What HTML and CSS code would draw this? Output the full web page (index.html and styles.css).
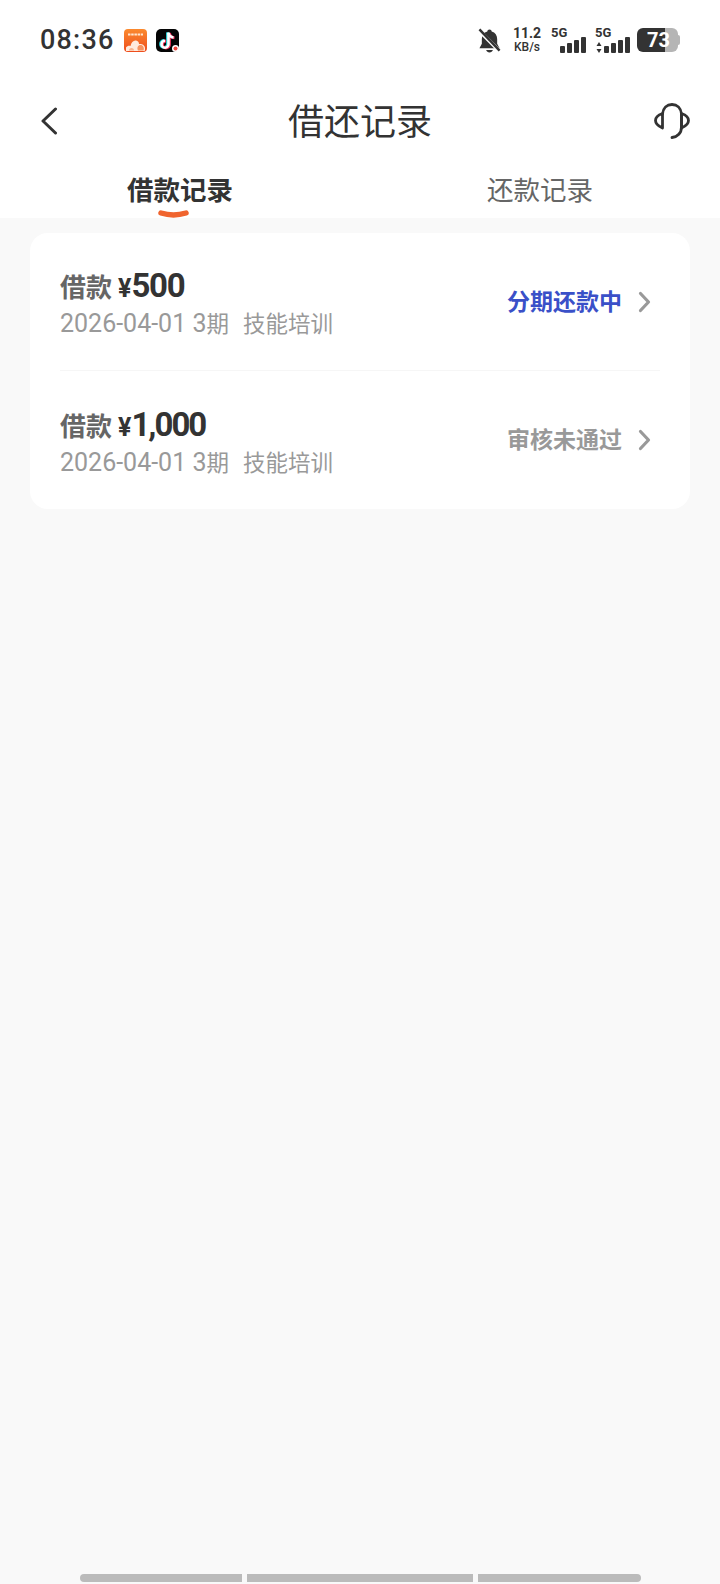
FILE: index.html
```html
<!DOCTYPE html>
<html lang="zh-CN">
<head>
    <meta charset="UTF-8">
    <meta name="viewport" content="width=device-width, initial-scale=1.0">
    <title>借还记录</title>
    <link rel="stylesheet" href="styles.css">
</head>
<body>
<div class="page">

    <div class="status-bar">
        <div class="status-left">
            <span class="clock">08:36</span>
            <svg class="app-icon first" viewBox="0 0 23 23">
                <defs>
                    <linearGradient id="orange" x1="0" y1="0" x2="0" y2="1">
                        <stop offset="0" stop-color="#fb8a2e"/>
                        <stop offset="1" stop-color="#ee4c1c"/>
                    </linearGradient>
                </defs>
                <rect width="23" height="23" rx="4" fill="url(#orange)"/>
                <path d="M4 5.500h15" stroke="#ffe6cf" stroke-width="2" stroke-dasharray="2.500 .7"/>
                <path d="M2 22v-3.500c1-1.500 3-2 4.500-1.500.7-3.500 3-6 5.500-5.500 2 .4 3 1.800 3 3.500 2.500-.5 6 1 6 4v2c0 .6-.4 1-1 1z" fill="#ffeadc"/>
                <path d="M14 21.500c-1.500-3 0-5.500 2.500-5.500s4 2.500 3 5.500z" fill="#f7935f"/>
                <path d="M5 21.500c0-1.500 1-2.500 2.500-2.500S10 20 10 21.500z" fill="#f9b48e"/>
            </svg>
            <svg class="app-icon" viewBox="0 0 23 23">
                <rect width="23" height="23" rx="5" fill="#050505"/>
                <g fill="none" stroke-width="2.800" transform="translate(-1 .5)" stroke="#2ad4dc">
                    <path d="M12.500 3v11.500a3.500 3.500 0 1 1-3.500-3.500"/>
                    <path d="M12.500 3c.3 2.800 2.200 4.500 5 4.800"/>
                </g>
                <g fill="none" stroke-width="2.800" transform="translate(1 1)" stroke="#f5305c">
                    <path d="M12.500 3v11.500a3.500 3.500 0 1 1-3.500-3.500"/>
                    <path d="M12.500 3c.3 2.800 2.200 4.500 5 4.800"/>
                </g>
                <g fill="none" stroke-width="2.600" transform="translate(0 .7)" stroke="#fff">
                    <path d="M12.500 3v11.500a3.500 3.500 0 1 1-3.500-3.500"/>
                    <path d="M12.500 3c.3 2.800 2.200 4.500 5 4.800"/>
                </g>
                <circle cx="19.500" cy="19.500" r="3.500" fill="#fff"/>
                <circle cx="19.500" cy="19.500" r="2" fill="#f0433a"/>
            </svg>
        </div>
        <div class="status-right">
            <svg class="bell" viewBox="0 0 24 26">
                <path d="M12 1.500c1.300 0 2.200.9 2.300 2 3.700 1 5.700 4 5.700 8v5l2.500 4.500H1.500L4 16.500v-5c0-4 2-7 5.700-8 .1-1.100 1-2 2.300-2z" fill="#333"/>
                <path d="M8.500 23h7c-.4 1.500-1.800 2.500-3.500 2.500S8.900 24.500 8.500 23z" fill="#333"/>
                <path d="M1.500 3l21 21" stroke="#fff" stroke-width="4"/>
                <path d="M1.500 1.500l21 22" stroke="#333" stroke-width="2.600"/>
            </svg>
            <div class="speed">
                <span class="speed-num">11.2</span>
                <span class="speed-unit">KB/s</span>
            </div>
            <div class="signal">
                <span class="net">5G</span>
                <div class="bars">
                    <i class="b1"></i><i class="b2"></i><i class="b3"></i><i class="b4"></i>
                </div>
            </div>
            <div class="signal second">
                <span class="net">5G</span>
                <div class="bars">
                    <svg class="updown" viewBox="0 0 6 11"><path d="M3 0l2.500 4h-5zM3 11L.5 7h5z" fill="#333"/></svg>
                    <i class="b1"></i><i class="b2"></i><i class="b3"></i><i class="b4"></i>
                </div>
            </div>
            <div class="battery">
                <div class="battery-body"><span>73</span></div>
                <div class="battery-nub"></div>
            </div>
        </div>
    </div>

    <div class="header">
        <svg class="back" viewBox="0 0 18 28"><path d="M15.500 2L3 14l12.500 12" fill="none" stroke="#333" stroke-width="3" stroke-linecap="round" stroke-linejoin="round"/></svg>
        <h1>借还记录</h1>
        <svg class="service" viewBox="0 0 36 36">
            <path d="M8.500 11C9 5 13 1.500 18 1.500S27 5 27.500 11v13c0 6-4 10-9.500 10.500" fill="none" stroke="#333" stroke-width="2.800" stroke-linecap="round"/>
            <path d="M8.500 10.500C4 12 1.500 15 1.500 17.500S4 23 8.500 25zM27.500 10.500c4.500 1.500 7 4.500 7 7s-2.500 5.500-7 7.500z" fill="none" stroke="#333" stroke-width="2.800" stroke-linejoin="round"/>
        </svg>
    </div>

    <div class="tabs">
        <div class="tab active">
            借款记录
            <svg class="tab-mark" viewBox="0 0 31 8"><path d="M3 3C11 5.500 20 5.500 28 3" fill="none" stroke="#f0642e" stroke-width="5.500" stroke-linecap="round"/></svg>
        </div>
        <div class="tab">还款记录</div>
    </div>

    <div class="content">
        <div class="card">
            <div class="row">
                <div class="row-info">
                    <div class="row-title">
                        <span class="label">借款</span>
                        <span class="yen">¥</span><span class="amount">500</span>
                    </div>
                    <div class="row-meta">2026-04-01 3<span class="cjk">期</span><span class="cjk purpose">技能培训</span></div>
                </div>
                <div class="row-state">
                    <span class="state-text blue">分期还款中</span>
                    <svg class="arrow" viewBox="0 0 13 22"><path d="M2.500 2.500l8 8.500-8 8.500" fill="none" stroke="#999" stroke-width="3.200" stroke-linecap="round" stroke-linejoin="round"/></svg>
                </div>
            </div>
            <div class="row">
                <div class="row-info">
                    <div class="row-title">
                        <span class="label">借款</span>
                        <span class="yen">¥</span><span class="amount long">1,000</span>
                    </div>
                    <div class="row-meta">2026-04-01 3<span class="cjk">期</span><span class="cjk purpose">技能培训</span></div>
                </div>
                <div class="row-state">
                    <span class="state-text">审核未通过</span>
                    <svg class="arrow" viewBox="0 0 13 22"><path d="M2.500 2.500l8 8.500-8 8.500" fill="none" stroke="#999" stroke-width="3.200" stroke-linecap="round" stroke-linejoin="round"/></svg>
                </div>
            </div>
        </div>
    </div>

    <div class="nav-bar">
        <div class="seg left"></div>
        <div class="seg middle"></div>
        <div class="seg right"></div>
    </div>

</div>
</body>
</html>
```

FILE: styles.css
```css
* {
    box-sizing: border-box;
}
html, body {
    margin: 0;
    padding: 0;
}
body {
    font-family: Roboto, "Noto Sans CJK SC", sans-serif;
    color: #333;
    background: #f9f9f9;
}
.page {
    width: 720px;
    height: 1584px;
    overflow: hidden;
    display: flex;
    flex-direction: column;
}

/* status bar */
.status-bar {
    height: 80px;
    flex: none;
    padding: 0 40px;
    background: #fff;
    display: flex;
    align-items: center;
    justify-content: space-between;
}
.status-left {
    display: flex;
    align-items: center;
}
.clock {
    font-size: 27px;
    font-weight: 500;
    letter-spacing: 1.200px;
    width: 84px;
}
.app-icon {
    width: 23px;
    height: 23px;
    margin-left: 9px;
}
.app-icon.first {
    margin-left: 0;
}
.status-right {
    display: flex;
    align-items: center;
}
.bell {
    width: 23px;
    height: 25px;
}
.speed {
    margin-left: 11px;
    width: 30px;
    display: flex;
    flex-direction: column;
    align-items: center;
    gap: 2px;
    font-weight: 700;
}
.speed-num {
    font-size: 14px;
    line-height: 13px;
}
.speed-unit {
    font-size: 12px;
    line-height: 11px;
    font-weight: 500;
}
.signal {
    margin-left: 7px;
    width: 37px;
    height: 26px;
    position: relative;
}
.signal.second {
    margin-left: 7px;
}
.net {
    position: absolute;
    left: 2px;
    top: 0;
    font-size: 13px;
    line-height: 12px;
    font-weight: 700;
}
.bars {
    position: absolute;
    right: 0;
    bottom: 0;
    display: flex;
    align-items: flex-end;
    gap: 2.300px;
}
.bars i {
    display: block;
    width: 4.700px;
    border-radius: 1px;
    background: #333;
}
.bars .b1 { height: 7px; }
.bars .b2 { height: 10px; }
.bars .b3 { height: 13px; }
.bars .b4 { height: 16px; }
.updown {
    width: 6px;
    height: 11px;
}
.battery {
    margin-left: 7px;
    display: flex;
    align-items: center;
}
.battery-body {
    width: 41px;
    height: 24px;
    border-radius: 6px;
    background: linear-gradient(to right, #333 0, #333 28px, #b5b5b5 28px, #b5b5b5 100%);
    color: #fff;
    font-size: 20px;
    font-weight: 700;
    line-height: 24px;
    padding-left: 10px;
}
.battery-nub {
    width: 2px;
    height: 10px;
    border-radius: 0 2px 2px 0;
    background: #b5b5b5;
}

/* header */
.header {
    height: 82px;
    flex: none;
    padding: 0 30px;
    background: #fff;
    display: grid;
    grid-template-columns: 1fr auto 1fr;
    align-items: center;
}
.header h1 {
    margin: 0;
    padding-top: 5px;
    font-size: 36px;
    font-weight: 400;
    line-height: 77px;
}
.back {
    width: 18px;
    height: 28px;
    margin-left: 10px;
}
.service {
    width: 36px;
    height: 36px;
    justify-self: end;
}

/* tabs */
.tabs {
    height: 56px;
    flex: none;
    background: #fff;
    display: flex;
}
.tab {
    flex: 1;
    position: relative;
    text-align: center;
    font-size: 26.500px;
    line-height: 58px;
    color: #666;
}
.tab.active {
    color: #333;
    font-weight: 700;
}
.tab-mark {
    position: absolute;
    left: 158px;
    top: 48px;
    width: 31px;
    height: 8px;
}

/* list */
.content {
    flex: 1;
    padding: 15px 30px;
}
.card {
    background: #fff;
    border-radius: 18px;
}
.row {
    height: 138px;
    margin: 0 30px;
    padding-right: 9px;
    display: flex;
    align-items: center;
    justify-content: space-between;
    border-bottom: 1px solid #f6f6f6;
}
.row:last-child {
    border-bottom: 0;
}
.row-info {
    padding-top: 7px;
}
.row-title {
    height: 40px;
    line-height: 35px;
    white-space: nowrap;
}
.label {
    font-size: 26px;
    font-weight: 700;
    color: #666;
}
.yen {
    font-size: 25px;
    font-weight: 700;
    margin-left: 2px;
}
.amount {
    font-size: 33px;
    font-weight: 700;
    letter-spacing: -1.200px;
}
.amount.long {
    letter-spacing: -2px;
}
.row-meta {
    height: 34px;
    line-height: 32px;
    font-size: 25px;
    color: #999;
    white-space: nowrap;
}
.cjk {
    font-size: 22.500px;
}
.purpose {
    margin-left: 14px;
}
.row-state {
    display: flex;
    align-items: center;
}
.state-text {
    font-size: 23px;
    font-weight: 700;
    line-height: 30px;
    padding-top: 2px;
    color: #999;
}
.state-text.blue {
    color: #3a50c8;
}
.arrow {
    width: 13px;
    height: 22px;
    margin-left: 16px;
}

/* gesture bar */
.nav-bar {
    height: 18px;
    flex: none;
    display: flex;
    justify-content: center;
    padding-top: 8px;
    gap: 5px;
}
.seg {
    height: 8px;
    background: #bbb;
}
.seg.left {
    width: 162px;
    border-radius: 4px 0 0 4px;
}
.seg.middle {
    width: 226px;
}
.seg.right {
    width: 163px;
    border-radius: 0 4px 4px 0;
}
```
